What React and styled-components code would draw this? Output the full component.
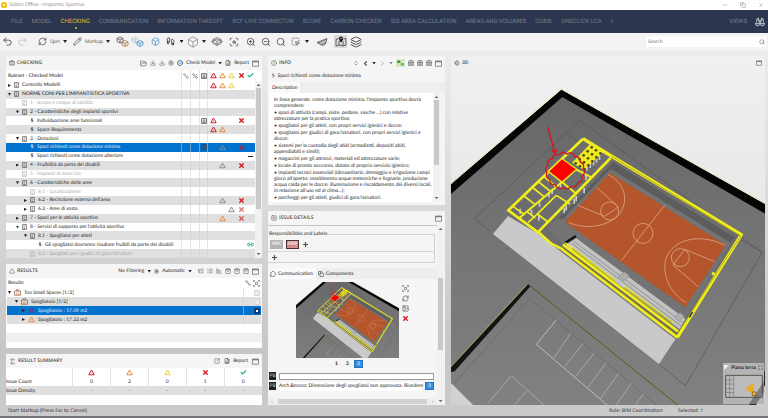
import React from 'react';
import styled, { createGlobalStyle, css } from 'styled-components';
import {
  Undo2, Redo2, RefreshCw, Pencil, Box, Footprints, Rotate3d, ZoomIn, ZoomOut, Search, Scan,
  SquareDashedMousePointer, Layers, FolderOpen, Download, Settings, CircleCheck,
  FileChartColumn, Link2, X, Check, Triangle, Briefcase, ListTree, List, ChartBar, Sigma,
  Info, ChevronLeft, ChevronRight, ChevronsUpDown, Plus, SquarePlus, MessageCircle, Image as ImageIcon,
  ScanSearch, Minus, Copy, Binoculars, ShoppingBag, SquareArrowOutUpRight,
} from 'lucide-react';

const RED = '#d2202c';
const ORANGE = '#f08a3c';
const YELLOW = '#f0cf3a';
const GREEN = '#1fae7c';
const GREY = '#8f8f8f';
const BLUE = '#0173cf';

const GlobalStyle = createGlobalStyle`
  * { box-sizing: border-box; }
  body { margin: 0; background: #d0d0d0; }
  body, button, input, table {
    font-family: Lato, 'Open Sans', sans-serif;
    font-size: 5px;
    line-height: 8px;
    color: #1c1c1c;
    text-rendering: geometricPrecision;
  }
  button { border: 0; padding: 0; background: none; }
  p { margin: 0; }
  svg { display: block; flex: none; }
`;

const Page = styled.div`
  display: flex;
  flex-direction: column;
  min-height: 100vh;
  background: linear-gradient(#ececec 50px, #dcdcdc 45%, #c6c6c6 85%, #cbcbcb);
  border-bottom: 2px solid #77757a;
  white-space: nowrap;
`;

const TitleBar = styled.header`
  display: flex;
  align-items: center;
  gap: 2px;
  height: 10px;
  padding: 0 4px 0 1px;
  background: #fff;
  color: #858585;
  font-family: 'Open Sans', sans-serif;
`;
const AppMark = styled.span`
  width: 6px;
  height: 6px;
  border: 2px solid #f3c51b;
  border-radius: 2px;
  background: #fff3b8;
`;
const WindowButtons = styled.div`
  display: flex;
  gap: 12px;
  margin-left: auto;
`;
const IconButton = styled.button`
  display: flex;
  align-items: center;
  justify-content: center;
  gap: 3px;
  color: ${(p) => p.$color || '#4c4c4c'};
`;

const NavBar = styled.nav`
  display: flex;
  align-items: center;
  gap: 9px;
  height: 23px;
  padding: 0 3px 0 11px;
  background: #2c374f;
`;
const NavLink = styled.a`
  position: relative;
  color: ${(p) => (p.$active ? '#e0b92c' : '#737c8d')};
  font-family: Roboto, 'Open Sans', sans-serif;
  font-size: 6px;
  text-decoration: none;
  ${(p) => p.$active && css`
    &::after {
      content: '';
      position: absolute;
      left: 50%;
      top: 9px;
      width: 2px;
      height: 2px;
      border-radius: 1px;
      background: #d9c34c;
    }
  `}
`;
const NavEnd = styled.div`
  display: flex;
  align-items: center;
  gap: 8px;
  margin-left: auto;
  color: #d5dae2;
`;

const Toolbar = styled.div`
  display: flex;
  align-items: center;
  height: 17px;
  padding-right: 2px;
  background: #f3f3f3;
`;
const Tool = styled.button`
  display: flex;
  align-items: center;
  justify-content: center;
  gap: 3px;
  width: ${(p) => p.$w || 15}px;
  height: 13px;
  margin-left: ${(p) => p.$gap || 0}px;
  color: ${(p) => p.$color || '#505050'};
  background: ${(p) => (p.$active ? '#dadada' : 'none')};
  font-family: 'Open Sans', sans-serif;
`;
const SearchBox = styled.label`
  display: flex;
  align-items: center;
  width: 120px;
  height: 11px;
  margin-left: auto;
  padding: 0 1px;
  background: #fff;
  color: #555;
  input { flex: 1; min-width: 0; padding: 0 1px; border: 0; outline: 0; background: none; }
`;
const Caret = styled.span`
  width: 4px;
  height: 3px;
  background: ${(p) => p.$color || '#222'};
  clip-path: polygon(0 0, 100% 0, 50% 100%);
`;

const Workspace = styled.main`
  flex: 1;
  display: grid;
  grid-template-columns: minmax(0, 256fr) minmax(0, 177fr) minmax(0, 314fr);
  gap: 6px;
  padding: 6px 3px 0 6px;
`;
const Column = styled.div`
  display: flex;
  flex-direction: column;
  gap: 6px;
  min-width: 0;
`;
const Panel = styled.section`
  display: flex;
  flex-direction: column;
  flex: ${(p) => (p.$grow ? '1' : 'none')};
  min-height: 0;
  background: #f5f5f5;
`;
const PanelHead = styled.div`
  display: flex;
  align-items: center;
  gap: ${(p) => p.$gap || 4}px;
  height: 14px;
  padding: 0 3px;
  color: #4c4c4c;
`;
const PanelTitle = styled.h2`
  display: flex;
  align-items: center;
  gap: 2px;
  margin: 0 auto 0 0;
  font-family: 'Open Sans', sans-serif;
  font-size: 5px;
  font-weight: 600;
  color: #4a4a4a;
`;
const TextButton = styled.button`
  display: flex;
  align-items: center;
  gap: 3px;
  color: #1c1c1c;
`;

const TreeFrame = styled.div`
  flex: 1;
  display: grid;
  grid-template-columns: 1fr 7px;
  grid-template-rows: 11px 1fr;
  background: #fff;
`;
const TreeRows = styled.div`
  display: grid;
  grid-auto-rows: 1fr;
`;
const columns = css`
  display: grid;
  grid-template-columns: minmax(0, 1fr) 9px 9px 8px 11px 9px 9px 10px 9px;
  align-items: stretch;
`;
const TreeHead = styled.div`
  ${columns}
`;
const TreeRow = styled.div`
  ${columns}
  background: ${(p) => (p.$selected ? BLUE : p.$shaded ? '#dfdfdf' : '#fff')};
  color: ${(p) => (p.$selected ? '#e3f0fc' : p.$faded ? '#a8a8a8' : '#1c1c1c')};
`;
const Cell = styled.span`
  display: flex;
  align-items: center;
  justify-content: center;
  border-left: ${(p) => (p.$ruled ? '1px solid #cccccc88' : '0')};
`;
const NameCell = styled.span`
  display: flex;
  align-items: center;
  gap: 3px;
  padding-left: ${(p) => p.$indent || 2}px;
`;
const Toggle = styled.span`
  width: 3px;
  height: 3px;
  background: ${(p) => (p.$hidden ? 'transparent' : '#222')};
  clip-path: ${(p) => (p.$open ? 'polygon(0 0, 100% 0, 50% 100%)' : 'polygon(0 0, 100% 50%, 0 100%)')};
`;
const Section = styled.span`
  width: 4px;
  font-weight: 700;
  text-align: center;
`;
const ScrollTrack = styled.div`
  display: flex;
  flex-direction: column;
  align-items: center;
  justify-content: space-between;
  gap: 2px;
  padding: 3px 0;
  background: #f1f1f1;
  color: #666;
`;
const ScrollThumb = styled.div`
  width: 5px;
  flex: ${(p) => p.$size} 0 0;
  background: #c9c9c9;
`;
const ScrollSpace = styled.div`
  flex: ${(p) => p.$size} 0 0;
`;
const ArrowUp = styled(Caret)`
  height: 2px;
  background: #666;
  clip-path: polygon(50% 0, 100% 100%, 0 100%);
`;
const ArrowDown = styled(Caret)`
  height: 2px;
  background: #666;
`;

const ResultList = styled.div`
  margin: 0 1px;
  padding-bottom: 6px;
  background: #fff;
`;
const ResultRow = styled.div`
  display: grid;
  grid-template-columns: minmax(0, 1fr) 9px 9px;
  height: ${(p) => (p.$head ? 10 : 9)}px;
  background: ${(p) => (p.$selected ? BLUE : p.$light ? '#efefef' : p.$shaded ? '#dfdfdf' : '#fff')};
  color: ${(p) => (p.$selected ? '#e3f0fc' : '#1c1c1c')};
`;
const Tick = styled.input`
  appearance: none;
  width: 6px;
  height: 6px;
  margin: 0;
  border: 1px solid #d4d4d4;
  border-radius: 1px;
  background: #ededed;
  &:checked { border: 2px solid #113a66; background: #fff; }
`;

const SummaryTable = styled.table`
  width: 100%;
  border-collapse: collapse;
  table-layout: fixed;
  background: #fff;
  th, td { height: 9px; padding: 0; font-weight: 400; text-align: center; }
  th + th, th + td, td + td { border-left: 1px solid #e2e2e2; }
  th:first-child { width: 26%; text-align: left; }
  svg { margin: 0 auto; }
`;
const SummaryRow = styled.tr`
  background: ${(p) => (p.$shaded ? '#dfdfdf' : '#fff')};
`;
const SummaryRest = styled.div`
  height: 10px;
  background: #fff;
`;

const InfoSubject = styled.p`
  display: flex;
  align-items: center;
  gap: 3px;
  height: 12px;
  padding: 0 4px;
`;
const TabList = styled.div`
  display: flex;
  align-items: stretch;
  height: 11px;
  margin-top: ${(p) => p.$gap || 0}px;
  background: #eeeeee;
`;
const Tab = styled.button`
  display: flex;
  align-items: center;
  gap: 2px;
  padding: 0 3px 0 ${(p) => (p.$tight ? 2 : 4)}px;
  background: ${(p) => (p.$active ? '#fafafa' : 'none')};
`;
const InfoBody = styled.div`
  display: grid;
  grid-template-columns: 1fr 7px;
  margin: 0 5px 3px 1px;
  background: #fff;
`;
const Description = styled.div`
  display: flex;
  flex-direction: column;
  gap: 1px;
  min-width: 0;
  padding: 4px 0 1px 5px;
  line-height: 6px;
`;

const DetailBody = styled.div`
  flex: 1;
  display: grid;
  grid-template-columns: minmax(0, 1fr) 7px;
  margin-right: 1px;
`;
const DetailContent = styled.div`
  display: flex;
  flex-direction: column;
  min-width: 0;
  border-top: 1px solid #c4c4c4;
`;
const Labels = styled.fieldset`
  min-width: 0;
  margin: 4px 2px 0 0;
  padding: 0;
  border: 1px solid #d2d2d2;
  border-left: 0;
  legend { padding: 0 1px; }
`;
const LabelRow = styled.div`
  display: flex;
  align-items: center;
  gap: 3px;
  height: ${(p) => (p.$last ? 11 : 13)}px;
  padding: 0 ${(p) => (p.$last ? 3 : 2)}px;
  border-top: ${(p) => (p.$last ? '1px solid #d8d8d8' : '0')};
`;
const Chip = styled.button`
  width: 13px;
  height: 9px;
  background: ${(p) => (p.$active ? '#d48b8b' : '#b4b4b4')};
  border: ${(p) => (p.$active ? '1px solid #4d3030' : '0')};
  line-height: 7px;
  color: ${(p) => (p.$active ? '#fbeaea' : '#f4f4f4')};
  font-weight: 700;
`;
const Shot = styled.div`
  display: grid;
  grid-template-columns: 28fr 102fr 38fr;
  margin-top: 3px;
`;
const ShotFrame = styled.div`
  grid-column: 2;
  aspect-ratio: 102 / 76;
  svg { width: 100%; height: 100%; }
`;
const ShotTools = styled.div`
  display: flex;
  flex-direction: column;
  align-items: flex-start;
  gap: 3px;
  padding: 3px 0 0 3px;
`;
const Pager = styled.div`
  display: flex;
  justify-content: center;
  gap: 2px;
  padding: 2px 10px 3px 0;
`;
const PageButton = styled.button`
  width: 9px;
  height: 8px;
  flex: none;
  background: ${(p) => (p.$active ? '#2f8fe8' : 'none')};
  color: ${(p) => (p.$active ? '#cfe8ff' : '#222')};
  border: ${(p) => (p.$active ? '1px solid #2a73bb' : '0')};
  font-weight: 700;
  line-height: ${(p) => (p.$active ? 6 : 8)}px;
`;
const Comment = styled.div`
  display: flex;
  align-items: center;
  gap: 3px;
  height: 10px;
  margin-right: 3px;
  padding-left: 1px;
  input { flex: 1; min-width: 0; height: 7px; padding: 0 2px; border: 1px solid #999; background: #fff; }
`;
const CommentText = styled.p`
  flex: 1;
  min-width: 0;
  height: 9px;
  background: #fff;
  line-height: 9px;
`;
const Author = styled.span`
  width: 7px;
  height: 8px;
  flex: none;
  background: #1d221d;
  color: #b5c4b2;
  text-align: center;
`;
const SideScroll = styled.div`
  display: flex;
  align-items: center;
  justify-content: space-between;
  gap: 4px;
  height: 7px;
  margin-top: auto;
  padding: 0 2px;
  color: #666;
  background: #efefef;
  span { flex: 1; height: 5px; background: #d2d2d2; }
`;

const Viewport = styled.section`
  position: relative;
  overflow: hidden;
  background: linear-gradient(#f0f0f0, #e9e9e9 40%, #cfcfcf 90%);
`;
const Canvas3D = styled.div`
  position: absolute;
  inset: 0;
  svg { width: 100%; height: 100%; }
`;
const ViewHead = styled(PanelHead)`
  position: relative;
`;
const MiniMap = styled.div`
  position: absolute;
  right: 1px;
  bottom: 1px;
  width: 41px;
  background: #b4b4b4;
`;
const MiniMapHead = styled.label`
  display: flex;
  align-items: center;
  justify-content: space-between;
  height: 9px;
  padding: 0 1px;
  font-weight: 700;
  input { appearance: none; width: 5px; height: 5px; margin: 0; background: #f2f2f2; clip-path: polygon(0 0, 100% 0, 0 100%); }
`;

const StatusBar = styled.footer`
  display: grid;
  grid-template-columns: 601fr 69fr 90fr;
  align-items: center;
  height: 11px;
  padding-left: 8px;
  font-family: 'Open Sans', sans-serif;
`;

const Warn = ({ c = RED }) => (
  <svg width="7" height="7" viewBox="0 0 14 14" fill="none" stroke={c} strokeLinejoin="round" aria-hidden="true">
    <path d="M7 2 L12.5 11.5 H1.5 Z" strokeWidth="2" />
    <path d="M7 6 V10" strokeWidth="1" opacity=".5" />
  </svg>
);
const Cross = ({ c = RED }) => <X size={7} strokeWidth={5} color={c} />;
const Win = ({ s = 7 }) => (
  <svg width={s} height={s} viewBox="0 0 14 14" fill="none" stroke="#666" aria-hidden="true">
    <path d="M1 2 H13 V12.5 H1 Z" strokeWidth="1.4" />
    <path d="M1 3.5 H13" strokeWidth="2" />
  </svg>
);
const RuleSet = ({ c = '#555' }) => (
  <svg width="5" height="6" viewBox="0 0 10 12" fill="none" stroke={c} aria-hidden="true">
    <path d="M1 1 H9 V11 H1 Z M3 4 H7 M3 6.5 H5.5 M3 9 H7" strokeWidth="1.3" />
  </svg>
);
const CheckedBox = ({ c = '#555' }) => (
  <svg width="6" height="6" viewBox="0 0 12 12" fill="none" stroke={c} aria-hidden="true">
    <path d="M1 1 H11 V11 H1 Z M3 4 H9 M3 6.5 H9 M3 9 H9" strokeWidth="1.5" />
  </svg>
);
const SpaceCase = () => (
  <svg width="7" height="7" viewBox="0 0 14 14" fill="none" stroke="#7a5134" aria-hidden="true">
    <path d="M1 4 H13 V12.5 H1 Z M5 4 V1.5 H9 V4" strokeWidth="1.3" />
    <path d="M7 6 L10 11 H4 Z" stroke={ORANGE} strokeWidth="1.2" />
  </svg>
);
const LinkMark = ({ slash }) => (
  <svg width="6" height="6" viewBox="0 0 12 12" fill="none" stroke="#666" aria-hidden="true">
    <rect x="1" y="2" width="5" height="3" rx="1.5" transform="rotate(40 3.5 3.5)" strokeWidth="1.2" />
    <rect x="6" y="7" width="5" height="3" rx="1.5" transform="rotate(40 8.5 8.5)" strokeWidth="1.2" />
    {slash && <path d="M10 2 L8 5 M2 10 L4 8" strokeWidth="1.2" />}
  </svg>
);
const cube = (cx, cy, r) => `M${cx} ${cy - r} l${r} ${r / 2} v${r} l${-r} ${r / 2} l${-r} ${-r / 2} v${-r} Z M${cx - r} ${cy - r / 2} l${r} ${r / 2} l${r} ${-r / 2} M${cx} ${cy} v${r}`;
const TwoCubes = ({ a, b, dashed }) => (
  <svg width="13" height="12" viewBox="0 0 26 24" fill="none" strokeWidth="1.7" strokeLinejoin="round" aria-hidden="true">
    <path d={cube(8, 8, 6)} stroke={a} strokeDasharray={dashed ? '2 1.5' : undefined} />
    <path d={cube(18, 15, 6)} stroke={b} fill="#f3f3f3" />
  </svg>
);
const SectionCube = () => (
  <svg width="12" height="11" viewBox="0 0 24 22" fill="none" stroke="#555" strokeWidth="1.3" strokeLinejoin="round" aria-hidden="true">
    <path d={cube(12, 11, 8)} />
    <path d="M1 11 L12 6 L23 11 L12 16 Z" />
  </svg>
);
const PlanSheet = () => (
  <svg width="13" height="10" viewBox="0 0 26 20" stroke="#555" fill="none" strokeWidth="1.6" aria-hidden="true">
    <path d="M2 11 L22 3 L19 14 L13 17 Z" fill="#8b8b8b" />
    <path d="M7 9 L16 15 M12 7 L18 12 M17 5 L20 9 M8 13 L20 8" stroke="#efefef" strokeWidth="1" />
  </svg>
);
const PinMap = () => (
  <svg width="12" height="11" viewBox="0 0 24 22" fill="none" stroke="#222" strokeWidth="1.3" strokeLinejoin="round" aria-hidden="true">
    <path d="M7 5 L2 7 V20 L8 18 L16 20 L22 18 V5 L17 6 M8 10 V18 M16 10 V20" />
    <path d="M12 13 C9 9 8 8 8 5 A4 4 0 0 1 16 5 C16 8 15 9 12 13 Z" fill="#111" stroke="none" />
    <circle cx="12" cy="5" r="1.500" fill="#dadada" stroke="none" />
  </svg>
);
const GreenLinks = () => (
  <svg width="9" height="8" viewBox="0 0 18 16" aria-hidden="true">
    <rect width="18" height="16" fill="#d8e8c6" />
    <rect x="2" y="3" width="7" height="5" rx="2" fill="#4f8f3a" />
    <rect x="9" y="8" width="7" height="5" rx="2" fill="#76b34f" />
  </svg>
);
const Drawer = () => (
  <svg width="6" height="6" viewBox="0 0 12 12" fill="#b9b9b9" stroke="#7a7a7a" aria-hidden="true">
    <path d="M1 3 L3 1 H9 L11 3 V11 H1 Z M1 5 H11 M4 8 H8" strokeWidth="1.3" />
  </svg>
);
const FitFrame = () => (
  <svg width="7" height="7" viewBox="0 0 14 14" fill="none" stroke="#666" strokeWidth="1.3" aria-hidden="true">
    <path d="M1 4 V1 H4 M10 1 H13 V4 M13 10 V13 H10 M4 13 H1 V10 M3 3 L11 11 M11 3 L3 11" />
    <circle cx="7" cy="7" r="2.500" fill="#f5f5f5" />
  </svg>
);

const lockers = [];
for (let i = 0; i < 5; i += 1) {
  for (let j = 0; j < 3; j += 1) lockers.push([431 + j * 13 - i * 12, 286 + j * 9 + i * 12]);
}
const posts = [[414, 340], [424, 332], [434, 324], [443, 316], [452, 308], [404, 350], [412, 368], [346, 468], [352, 460], [300, 420], [310, 410], [272, 448], [270, 490], [335, 392], [376, 440], [382, 432], [406, 408], [248, 474], [214, 470]];
const bays = [[368, 844, 318, 917], [405, 874, 350, 945], [440, 902, 382, 974], [475, 932, 420, 1006], [512, 964, 458, 1039], [550, 994, 497, 1070], [588, 1024, 540, 1090]];

const cloudPoint = (k) => {
  const a = -1.9 + (k * Math.PI * 2) / 14;
  return `${Math.round(351 + 54 * Math.cos(a))} ${Math.round(356 + 50 * Math.sin(a))}`;
};
const cloud = Array.from({ length: 14 }, (_, k) => `A14 14 0 0 1 ${cloudPoint(k + 1)}`).join(' ');

function Model({ viewBox, id, fit }) {
  return (
    <svg viewBox={viewBox} preserveAspectRatio={fit} role="img" aria-label="Impianto sportivo">
      <defs>
        <linearGradient id={id} x1="0" y1="0" x2="0" y2="1">
          <stop offset="0" stopColor="#666666" />
          <stop offset=".45" stopColor="#747474" />
          <stop offset="1" stopColor="#828282" />
        </linearGradient>
      </defs>
      <path d="M341 113 L1100 540 V1100 H115 L9 994 L-80 900 V470 Z" fill={`url(#${id})`} />
      <path d="M340 113 L1100 540 V570 L343 135 L-80 504 V471 Z" fill="#050505" />
      <path d="M-60 455 L340 111 L1100 538" fill="none" stroke="#e4e6b8" strokeWidth="3" />
      <g fill="none" stroke="#555" strokeWidth="2">
        <path d="M395 205 L943 601 L712 1001 L633 936 M395 205 L80 500 L130 540 M355 245 L395 270" />
        <path d="M880 564 L943 601" />
      </g>
      <path d="M180 492 L135 546 L633 936 L682 862 L340 600 L270 545 Z" fill="#c9c9c9" />
      <path d="M405 268 L490 318 L876 552 L688 850 L340 590 L184 478 Z" fill="#6d6d6d" />
      <path d="M492 328 L860 552 L690 838 L345 580 L300 530 Z" fill="#737373" />
      <path d="M495 330 L860 556 L848 572 L488 350 L345 500 L330 500 Z" fill="#5c5c5c" />
      <path d="M485 362 L833 579 L712 766 L350 510 Z" fill="#b4552b" />
      <g fill="none" stroke="#dba587" strokeWidth="2.500">
        <path d="M650 460 L520 626" />
        <circle cx="585" cy="544" r="30" />
        <path d="M480 368 C540 395 545 465 500 500 C460 528 405 530 362 512" />
        <path d="M445 405 L511 465 L470 493 L390 460" />
        <circle cx="485" cy="477" r="27" />
        <path d="M832 580 C750 540 672 565 654 620 C638 680 680 735 715 752" />
        <path d="M800 629 L710 592 L675 639 L750 704" />
        <circle cx="697" cy="617" r="27" />
      </g>
      <path d="M385 559 L712 800 L695 832 L352 580 Z" fill="#c2c2c2" />
      <path d="M378 568 L705 812 M372 574 L700 822" fill="none" stroke="#919191" strokeWidth="3" />
      <path d="M352 572 L384 552" stroke="#111" strokeWidth="7" />
      <path d="M512 674 l18 -14 14 12 -16 14 Z M680 796 l16 -14 12 10 -14 16 Z" fill="#b0b0b0" stroke="#8b8b8b" strokeWidth="2" />
      <g fill="none" stroke="#f2ee1c" strokeLinejoin="round">
        <path d="M270 539 L310 575 L340 590 L688 856" stroke="#f0ec1f" strokeWidth="8" />
        <path d="M345 578 L690 838" strokeWidth="8" />
        <path d="M352 572 L500 684 M525 700 L675 812 M368 590 L500 690" strokeWidth="4" />
        <path d="M372 590 L500 688 M530 708 L672 812" stroke="#b7b438" strokeWidth="5" />
        <path d="M345 588 L688 848" stroke="#7d7a16" strokeWidth="2" />
        <path d="M405 260 L490 312 L880 548 L688 856" strokeWidth="10" />
        <path d="M490 312 L878 552 L688 846" stroke="#8e8b1d" strokeWidth="2" />
        <path d="M405 260 L181 475 L270 541 L278 532 L488 318" strokeWidth="8" />
      </g>
      <g fill="#c9c9c9">
        {posts.map(([x, y]) => <rect key={`${x}-${y}`} x={x} y={y} width="5" height="16" />)}
      </g>
      <path d="M430 272 L470 296 L408 354 L372 332 Z" fill="#eeea1e" />
      <g fill="#4a4814">
        {lockers.map(([x, y]) => <ellipse key={`${x}-${y}`} cx={x} cy={y} rx="4" ry="4" />)}
      </g>
      <g fill="none" stroke="#f2ee1c" strokeWidth="6">
        <path d="M384 352 L342 390 L214 498 M384 352 L430 376 M342 390 L386 426 M342 322 L385 352" />
        <path d="M302 358 L342 390 M286 372 L322 402 M270 388 L306 417 M252 405 L288 434 M228 432 L262 458 M196 464 L230 488" strokeWidth="5" />
        <path d="M325 430 L366 456 M325 430 L268 486 L300 510 M268 486 L240 512 M236 478 L262 498" strokeWidth="5" />
      </g>
      <path d="M342 322 L383 352 L342 388 L304 358 Z" fill="#fb0200" />
      <path d={`M${cloudPoint(0)} ${cloud}`} fill="none" stroke="#cf1620" strokeWidth="4" />
      <path d="M299 225 L320 300 M311 294 L321 304 L328 291" fill="none" stroke="#dc1420" strokeWidth="4" />
      <path d="M240 697 L9 946 V960 L20 958 L248 702 Z" fill="#141410" />
      <path d="M236 698 L9 944" stroke="#b8b64a" strokeWidth="2" />
      <path d="M244 700 L690 1060" stroke="#5b5b16" strokeWidth="3" />
      <path d="M20 994 L245 739 L625 1058" fill="none" stroke="#666" strokeWidth="2" />
      <g fill="none" stroke="#bdbdbd" strokeWidth="2">
        <path d="M325 804 L265 877 L490 1070" strokeWidth="3" />
        {bays.map(([a, b, c, d]) => <path key={a} d={`M${a} ${b} L${c} ${d}`} />)}
        <path d="M120 1054 L190 971 L290 1062 M235 1019 L200 1058" />
      </g>
      <path d="M951 955 V1000 L925 1060 H903 Z" fill="#2a2a2a" />
      <path d="M951 1000 V1060 H925 Z" fill="#cfcfcf" />
      <path d="M9 994 L75 1059 H9 Z" fill="#d2d2d2" />
      <circle cx="796" cy="665" r="5" fill="#f2ee1c" />
      <path d="M724 796 l10 -16" stroke="#222" strokeWidth="4" />
    </svg>
  );
}

const NAV = ['FILE', 'MODEL', 'CHECKING', 'COMMUNICATION', 'INFORMATION TAKEOFF', 'BCF LIVE CONNECTOR', 'SCORE', 'CARBON CHECKER', 'SIS AREA CALCULATION', 'AREAS AND VOLUMES', 'COBIE', 'ONECLICK LCA', '+'];

const w = (c) => <Warn c={c} />;
const x = (c) => <Cross c={c} />;
const TREE = [
  { t: 'Controllo Modelli', lv: 0, open: false, m: { 4: w(RED), 5: w(ORANGE), 6: w(YELLOW) } },
  { t: "NORME CONI PER L'IMPIANTISTICA SPORTIVA", lv: 0, open: true },
  { t: '1 - Scopo e campo di validità', lv: 1, faded: true },
  { t: '2 - Caratteristiche degli impianti sportivi', lv: 1, open: true },
  { t: 'Individuazione aree funzionali', lv: 2, rule: true, m: { 3: <CheckedBox />, 4: w(RED), 7: x(RED) } },
  { t: 'Space Requirements', lv: 2, rule: true, m: { 4: w(RED), 5: w(ORANGE) } },
  { t: '3 - Dotazioni', lv: 1, open: true },
  { t: 'Spazi richiesti come dotazione minima', lv: 2, rule: true, selected: true, m: { 3: <CheckedBox c="#37424f" />, 5: w('#6f8ba6'), 7: x('#8c2f5c') } },
  { t: 'Spazi richiesti come dotazione ulteriore', lv: 2, rule: true, m: { 8: <Minus size={7} strokeWidth={4} /> } },
  { t: '4 - Fruibilità da parte dei disabili', lv: 1, open: false, m: { 5: w(GREY), 7: x(RED) } },
  { t: '5 - Impianti di esercizio', lv: 1, faded: true },
  { t: '6 - Caratteristiche delle aree', lv: 1, open: true },
  { t: '6.1 - Localizzazione', lv: 2, faded: true },
  { t: "6.2 - Recinzione esterna dell'area", lv: 2, open: false, m: { 5: w(GREY), 7: x(RED) } },
  { t: '6.3 - Aree di sosta', lv: 2, open: false, m: { 6: w(GREY), 7: x('#dd7b80') } },
  { t: '7 - Spazi per le attività sportive', lv: 1, open: false, m: { 5: w(ORANGE), 7: x('#d65a60') } },
  { t: "8 - Servizi di supporto per l'attività sportiva", lv: 1, open: true },
  { t: '8.1 - Spogliatoi per atleti', lv: 2, open: true },
  { t: 'Gli spogliatoi dovranno risultare fruibili da parte dei disabili', lv: 3, rule: true, m: { 8: <Link2 size={7} strokeWidth={3} color={GREEN} /> } },
  { t: '8.2 - Spogliati per i giudici di gara/istruttori', lv: 2, faded: true },
];
const HEAD_ICONS = [
  <LinkMark />, <LinkMark slash />, <CheckedBox />, <Warn />, <Warn c={ORANGE} />, <Warn c={YELLOW} />, <Cross />,
  <Check size={7} strokeWidth={4} color={GREEN} />,
];

function CheckingPanel() {
  return (
    <Panel $grow>
      <PanelHead $gap={3}>
        <PanelTitle><Briefcase size={6} />CHECKING</PanelTitle>
        <IconButton aria-label="Open ruleset"><FolderOpen size={7} /></IconButton>
        <IconButton aria-label="Save"><Download size={6} /></IconButton>
        <IconButton aria-label="Save as"><Download size={6} /></IconButton>
        <IconButton aria-label="Settings"><Settings size={6} /></IconButton>
        <TextButton><CircleCheck size={6} color="#1b5a86" strokeWidth={3} />Check Model<Caret /></TextButton>
        <TextButton><FileChartColumn size={6} />Report</TextButton>
        <IconButton aria-label="Maximize"><Win /></IconButton>
      </PanelHead>
      <TreeFrame>
        <TreeHead>
          <NameCell>Ruleset - Checked Model</NameCell>
          {HEAD_ICONS.map((icon, i) => <Cell key={i} $ruled={i < 4}>{icon}</Cell>)}
        </TreeHead>
        <span />
        <TreeRows role="tree" aria-label="Ruleset">
          {TREE.map((r, i) => (
            <TreeRow key={r.t} role="treeitem" aria-selected={!!r.selected} $shaded={i % 2 === 1} $selected={r.selected} $faded={r.faded}>
              <NameCell $indent={2 + r.lv * 8}>
                <Toggle $open={r.open} $hidden={r.open === undefined} />
                {r.rule ? <Section>§</Section> : <RuleSet c={r.faded ? '#b5b5b5' : '#555'} />}
                {r.t}
              </NameCell>
              {HEAD_ICONS.map((_, c) => <Cell key={c} $ruled={c < 4}>{r.m && r.m[c + 1]}</Cell>)}
            </TreeRow>
          ))}
        </TreeRows>
        <ScrollTrack aria-hidden="true">
          <ArrowUp /><ScrollThumb $size={120} /><ScrollSpace $size={40} /><ArrowDown />
        </ScrollTrack>
      </TreeFrame>
    </Panel>
  );
}

const RESULTS = [
  { t: 'Too Small Spaces [1/2]', lv: 0, open: true, icon: <SpaceCase />, tick: false },
  { t: 'Spogliatoio [1/2]', lv: 1, open: true, icon: <SpaceCase />, tick: false },
  { t: 'Spogliatoio : 17.09 m2', lv: 2, open: false, icon: <Cross c="#6d3a8c" />, selected: true, tick: true },
  { t: 'Spogliatoio : 17.33 m2', lv: 2, open: false, icon: <Warn c={ORANGE} /> },
];

function ResultsPanel() {
  return (
    <Panel>
      <PanelHead $gap={3}>
        <PanelTitle><Triangle size={6} />RESULTS</PanelTitle>
        <TextButton>No Filtering<Caret /></TextButton>
        <TextButton><Settings size={5} />Automatic<Caret /></TextButton>
        <span />
        <IconButton aria-label="Tree"><ListTree size={6} /></IconButton>
        <IconButton aria-label="List"><List size={6} /></IconButton>
        <IconButton aria-label="Chart"><ChartBar size={6} /></IconButton>
        <IconButton aria-label="Accept"><ShoppingBag size={6} /></IconButton>
        <IconButton aria-label="Reject"><ShoppingBag size={6} /></IconButton>
        <IconButton aria-label="Clear"><ShoppingBag size={6} /></IconButton>
        <IconButton aria-label="Maximize"><Win /></IconButton>
      </PanelHead>
      <ResultList>
        <ResultRow $head>
          <NameCell $indent={1}>Results</NameCell>
          <Cell><LinkMark /></Cell>
          <Cell><FitFrame /></Cell>
        </ResultRow>
        {RESULTS.map((r, i) => (
          <ResultRow key={r.t} $shaded={i % 2 === 1} $selected={r.selected}>
            <NameCell $indent={1 + r.lv * 7}><Toggle $open={r.open} />{r.icon}{r.t}</NameCell>
            <Cell $ruled />
            <Cell>{r.tick !== undefined && <Tick type="checkbox" defaultChecked={r.tick} aria-label={r.t} />}</Cell>
          </ResultRow>
        ))}
        <ResultRow />
        <ResultRow $light />
      </ResultList>
    </Panel>
  );
}

function SummaryPanel() {
  return (
    <Panel>
      <PanelHead>
        <PanelTitle><Sigma size={7} />RESULT SUMMARY</PanelTitle>
        <IconButton aria-label="Export"><SquareArrowOutUpRight size={6} /></IconButton>
        <TextButton><FileChartColumn size={6} />Report</TextButton>
        <IconButton aria-label="Maximize"><Win /></IconButton>
      </PanelHead>
      <SummaryTable>
        <thead>
          <tr>
            <th aria-label="Measure" />
            <th><Warn /></th><th><Warn c={ORANGE} /></th><th><Warn c={YELLOW} /></th><th><Cross /></th>
            <th><Check size={7} strokeWidth={4} color={GREEN} /></th>
          </tr>
        </thead>
        <tbody>
          <SummaryRow><th scope="row">Issue Count</th><td>0</td><td>2</td><td>0</td><td>1</td><td>0</td></SummaryRow>
          <SummaryRow $shaded><th scope="row">Issue Density</th><td>-</td><td>-</td><td>-</td><td>-</td><td>-</td></SummaryRow>
        </tbody>
      </SummaryTable>
      <SummaryRest />
    </Panel>
  );
}

const DESCRIPTION = [
  ["In linea generale, come dotazione minima, l'impianto sportivo dovrà", 'comprendere:'],
  ['• spazi di attività (campi, piste, pedane, vasche ...) con relative', 'attrezzature per la pratica sportiva;'],
  ['• spogliatoi per gli atleti, con propri servizi igienici e docce;'],
  ['• spogliatoi per giudici di gara/istruttori, con propri servizi igienici e', 'docce;'],
  ['• sistemi per la custodia degli abiti (armadietti, depositi abiti,', 'appendiabiti e simili);'],
  ['• magazzini per gli attrezzi, materiali ed attrezzature varie;'],
  ['• locale di pronto soccorso, dotato di proprio servizio igienico;'],
  ['• impianti tecnici essenziali (idrosanitario, drenaggio e irrigazione campi', "gioco all'aperto; smaltimento acque meteoriche e fognarie, produzione", 'acqua calda per le docce; illuminazione e riscaldamento dei diversi locali,', "in relazione all'uso ed al clima...);"],
  ['• parcheggi per gli atleti, giudici di gara/istruttori.'],
];

function InfoPanel() {
  return (
    <Panel>
      <PanelHead $gap={3}>
        <PanelTitle><Info size={6} />INFO</PanelTitle>
        <IconButton aria-label="Sort"><ChevronsUpDown size={6} /></IconButton>
        <IconButton aria-label="Back"><ChevronLeft size={7} strokeWidth={4} /><Caret /></IconButton>
        <IconButton aria-label="Forward" $color="#888"><ChevronRight size={7} /><Caret $color="#888" /></IconButton>
        <IconButton aria-label="Links"><GreenLinks /></IconButton>
        <IconButton aria-label="Previous issue"><Drawer /></IconButton>
        <IconButton aria-label="Next issue"><Drawer /></IconButton>
        <IconButton aria-label="Copy"><Drawer /></IconButton>
        <IconButton aria-label="Maximize"><Win /></IconButton>
      </PanelHead>
      <InfoSubject><span>§</span>Spazi richiesti come dotazione minima</InfoSubject>
      <TabList role="tablist"><Tab role="tab" $active>Description</Tab></TabList>
      <InfoBody>
        <Description>
          {DESCRIPTION.map((lines) => (
            <p key={lines[0]}>
              {lines.map((line, i) => <React.Fragment key={line}>{i > 0 && <br />}{line}</React.Fragment>)}
            </p>
          ))}
        </Description>
        <ScrollTrack aria-hidden="true">
          <ArrowUp /><ScrollThumb $size={66} /><ScrollSpace $size={28} /><ArrowDown />
        </ScrollTrack>
      </InfoBody>
    </Panel>
  );
}

function IssuePanel() {
  return (
    <Panel $grow>
      <PanelHead>
        <PanelTitle><SquarePlus size={6} />ISSUE DETAILS</PanelTitle>
        <IconButton aria-label="Maximize"><Win /></IconButton>
      </PanelHead>
      <DetailBody>
        <DetailContent>
          <Labels>
            <legend>Responsibilities and Labels</legend>
            <LabelRow>
              <Chip>ARC</Chip><Chip $active>ARP</Chip>
              <IconButton aria-label="Add label"><Plus size={7} strokeWidth={4} /></IconButton>
            </LabelRow>
            <LabelRow $last><IconButton aria-label="Add responsibility"><Plus size={7} strokeWidth={4} /></IconButton></LabelRow>
          </Labels>
          <TabList role="tablist" $gap={5}>
            <Tab role="tab" $active $tight><MessageCircle size={6} />Communication</Tab>
            <Tab role="tab" $tight><Copy size={6} />Components</Tab>
          </TabList>
          <Shot>
            <ShotFrame><Model viewBox="-22 208 960 710" id="groundShot" fit="none" /></ShotFrame>
            <ShotTools>
              <IconButton aria-label="Zoom to"><FitFrame /></IconButton>
              <IconButton aria-label="Refresh"><RefreshCw size={7} /></IconButton>
              <IconButton aria-label="Picture"><ImageIcon size={7} /></IconButton>
              <IconButton aria-label="Delete"><Cross /></IconButton>
            </ShotTools>
          </Shot>
          <Pager><PageButton>1</PageButton><PageButton>2</PageButton><PageButton $active>3</PageButton></Pager>
          <Comment><Author>PB</Author><input aria-label="New comment" /></Comment>
          <Comment>
            <Author>PB</Author>
            <CommentText>Arch.Bronzo: Dimensione degli spogliatoi non approvata. Rivedere</CommentText>
            <PageButton $active>3</PageButton>
          </Comment>
          <SideScroll aria-hidden="true"><ChevronLeft size={4} /><span /><ChevronRight size={4} /></SideScroll>
        </DetailContent>
        <ScrollTrack aria-hidden="true">
          <ArrowUp /><ScrollSpace $size={46} /><ScrollThumb $size={76} /><ScrollSpace $size={48} /><ArrowDown />
        </ScrollTrack>
      </DetailBody>
    </Panel>
  );
}

function ModelView() {
  return (
    <Viewport>
      <Canvas3D><Model viewBox="9 12 942 1047" id="groundMain" fit="xMidYMid slice" /></Canvas3D>
      <ViewHead>
        <PanelTitle><Rotate3d size={6} />3D</PanelTitle>
        <IconButton aria-label="Maximize"><Win s={6} /></IconButton>
      </ViewHead>
      <MiniMap>
        <MiniMapHead><input type="checkbox" />Piano terra<Scan size={5} /></MiniMapHead>
        <svg width="41" height="32" viewBox="0 0 123 96" fill="none" aria-hidden="true">
          <path d="M8 10 H118 V76 H8 Z" fill="#bcbcbc" stroke="#555" strokeWidth="3" />
          <path d="M32 10 V76 M8 24 H32 M8 36 H32 M8 50 H32 M8 62 H32 M20 10 V76" stroke="#777" strokeWidth="2" />
          <path d="M94 66 L66 52 L90 34 Z" fill="#f0a91c" />
          <path d="M88 60 h11 v11 h-11 Z" fill="#f7bd22" stroke="#6a4c0d" strokeWidth="2" />
          <path d="M123 28 V60 L100 96 H78 Z" fill="#4a4a4a" opacity=".55" />
        </svg>
      </MiniMap>
    </Viewport>
  );
}

export default function App() {
  return (
    <>
      <GlobalStyle />
      <Page>
        <TitleBar>
          <AppMark />Solibri Office - Impianto Sportivo
          <WindowButtons>
            <IconButton aria-label="Minimize" $color="#999"><Minus size={6} /></IconButton>
            <IconButton aria-label="Restore" $color="#888"><Copy size={6} /></IconButton>
            <IconButton aria-label="Close" $color="#999"><X size={6} /></IconButton>
          </WindowButtons>
        </TitleBar>
        <NavBar>
          {NAV.map((n) => <NavLink key={n} href="#" $active={n === 'CHECKING'}>{n}</NavLink>)}
          <NavEnd><NavLink href="#">VIEWS</NavLink><Binoculars size={10} /></NavEnd>
        </NavBar>
        <Toolbar>
          <Tool aria-label="Undo"><Undo2 size={11} /></Tool>
          <Tool aria-label="Redo" $color="#c4c4c4"><Redo2 size={11} /></Tool>
          <Tool $w={37} $gap={4}><RefreshCw size={9} />Spin<Caret /></Tool>
          <Tool $w={41}><Pencil size={9} />Markup<Caret /></Tool>
          <Tool aria-label="Components" $gap={3}><TwoCubes a="#5d5d5d" b="#a07a4c" /></Tool>
          <Tool aria-label="Hidden components"><TwoCubes a="#8aa9bf" b="#4b95cc" dashed /></Tool>
          <Tool aria-label="Show component" $gap={3} $color="#4b95cc"><Box size={9} /></Tool>
          <Tool aria-label="Walk" $color="#222"><Footprints size={9} /></Tool>
          <Tool aria-label="Walk options" $w={7}><Caret /></Tool>
          <Tool aria-label="View cube"><Box size={12} strokeWidth={1} /></Tool>
          <Tool aria-label="View options" $w={8}><Caret /></Tool>
          <Tool aria-label="Section" $gap={1}><SectionCube /></Tool>
          <Tool aria-label="Zoom all" $gap={2}><ScanSearch size={10} /></Tool>
          <Tool aria-label="Zoom in" $gap={2}><ZoomIn size={10} /></Tool>
          <Tool aria-label="Zoom out"><ZoomOut size={10} /></Tool>
          <Tool aria-label="Zoom selected"><Search size={10} /></Tool>
          <Tool aria-label="Select"><SquareDashedMousePointer size={9} /></Tool>
          <Tool aria-label="Select options" $w={8}><Caret /></Tool>
          <Tool aria-label="Floor plan" $gap={4}><PlanSheet /></Tool>
          <Tool aria-label="Map" $active $w={13} $gap={4}><PinMap /></Tool>
          <Tool aria-label="Layers" $gap={1}><Layers size={12} /></Tool>
          <SearchBox><input aria-label="Search" placeholder="Search" /><Search size={6} /></SearchBox>
        </Toolbar>
        <Workspace>
          <Column><CheckingPanel /><ResultsPanel /><SummaryPanel /></Column>
          <Column><InfoPanel /><IssuePanel /></Column>
          <ModelView />
        </Workspace>
        <StatusBar>
          <span>Start Markup (Press Esc to Cancel)</span>
          <span>Role: BIM Coordination</span>
          <span>Selected: 1</span>
        </StatusBar>
      </Page>
    </>
  );
}
